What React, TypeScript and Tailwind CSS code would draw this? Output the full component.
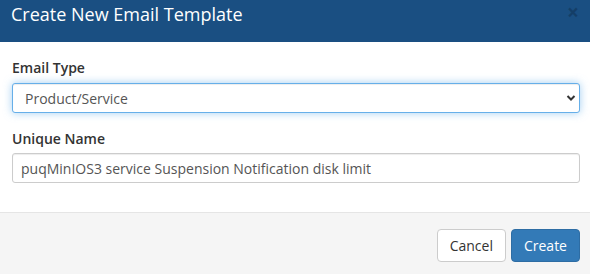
import React from "react";

export default function App() {
  return (
    <div className="w-[590px] h-[274px] bg-white overflow-hidden flex flex-col" style={{ fontFamily: '"Open Sans", sans-serif' }}>
      <div className="relative h-[42px] bg-[#1a4f82] flex items-start pl-[11px] pt-[1px]">
        <h4 className="text-white text-[18px] leading-[26px] font-normal">Create New Email Template</h4>
        <button className="absolute right-[11px] top-[2px] text-[21px] font-bold leading-[21px] text-black opacity-20">×</button>
      </div>
      <div className="pt-[16px] pl-3 pr-[10px] pb-[29px] text-[#333]">
        <div className="mb-[16px]">
          <label className="block text-[14px] leading-[20px] font-semibold mb-[5px]">Email Type</label>
          <div className="relative">
            <select className="appearance-none w-full h-[30px] border border-[#66afe9] rounded-[3px] pl-[12px] text-[14px] text-[#555] bg-white outline-none shadow-[inset_0_1px_1px_rgba(0,0,0,0.075),0_0_8px_rgba(102,175,233,0.6)]" defaultValue="ps">
              <option value="ps">Product/Service</option>
            </select>
            <svg className="absolute right-[4px] top-[11px] pointer-events-none" width="10" height="8" viewBox="0 0 10 8">
              <path d="M1.5 2 L5 5.5 L8.5 2" fill="none" stroke="#333" strokeWidth="2" />
            </svg>
          </div>
        </div>
        <div>
          <label className="block text-[14px] leading-[20px] font-semibold mb-[4px]">Unique Name</label>
          <input
            className="w-full h-[30px] border border-[#ccc] rounded-[3px] px-[8px] text-[14px] text-[#555] bg-white outline-none shadow-[inset_0_1px_1px_rgba(0,0,0,0.075)]"
            defaultValue="puqMinIOS3 service Suspension Notification disk limit"
          />
        </div>
      </div>
      <div className="flex-1 border-t border-[#e5e5e5] bg-[#f5f5f5] flex justify-end items-start gap-[5px] pt-[16px] pr-[10px]">
        <button className="h-[33px] px-[12px] bg-white border border-[#ccc] rounded-[4px] text-[14px] text-[#333]">Cancel</button>
        <button className="h-[33px] px-[12px] bg-[#337ab7] border border-[#2e6da4] rounded-[4px] text-[14px] text-white">Create</button>
      </div>
    </div>
  );
}
